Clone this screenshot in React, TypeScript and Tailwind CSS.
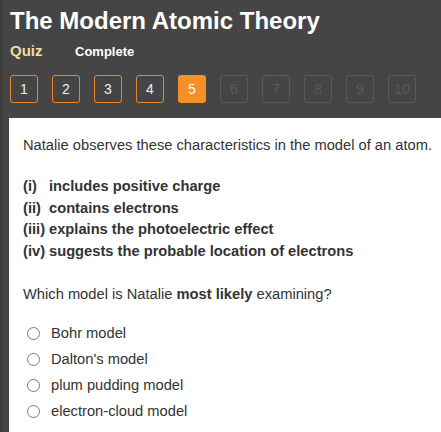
import { useState } from "react";

const options = ["Bohr model", "Dalton's model", "plum pudding model", "electron-cloud model"];

const traits = [
  ["(i)", "includes positive charge"],
  ["(ii)", "contains electrons"],
  ["(iii)", "explains the photoelectric effect"],
  ["(iv)", "suggests the probable location of electrons"],
];

export default function App() {
  const [picked, setPicked] = useState<number | null>(null);
  const current = 5;

  return (
    <div
      className="min-h-[432px] w-[441px] bg-[#454545] border-l-[3px] border-[#3b3b3b] flex flex-col"
      style={{ fontFamily: '"Liberation Sans", Arial, sans-serif' }}
    >
      {/* Header */}
      <div className="pl-[7px] pt-[7px]">
        <h1 className="text-[24px] leading-[28px] font-bold text-white">The Modern Atomic Theory</h1>
        <div className="flex items-baseline mt-[7px] h-[18px]">
          <span className="text-[15px] leading-[18px] font-bold text-[#f3dc9c] w-[65px]">Quiz</span>
          <span className="text-[13px] leading-[18px] font-bold text-white">Complete</span>
        </div>

        {/* Question nav */}
        <div className="flex gap-[14px] mt-[15px]">
          {Array.from({ length: 10 }, (_, i) => i + 1).map((n) => {
            const done = n < current;
            const active = n === current;
            return (
              <div
                key={n}
                className={
                  "w-[28px] h-[28px] rounded-[3px] flex items-center justify-center text-[14px] " +
                  (active
                    ? "bg-[#f58f26] text-white"
                    : done
                    ? "border border-[#e8872a] text-[#eeeeee]"
                    : "border border-[#5b5b5b] text-[#5b5b5b]")
                }
              >
                {n}
              </div>
            );
          })}
        </div>
      </div>

      {/* Question panel */}
      <div className="flex-1 bg-white mt-[15px] ml-[6px] pl-[14px] pt-[17px] pb-[14px] text-[#333333] text-[14.7px]">
        <p className="leading-[20px]">Natalie observes these characteristics in the model of an atom.</p>

        <div className="mt-[21px] font-bold leading-[21.5px]">
          {traits.map(([k, v]) => (
            <div key={k} className="flex">
              <span className="w-[26px]">{k}</span>
              <span>{v}</span>
            </div>
          ))}
        </div>

        <p className="mt-[22px] leading-[20px]">
          Which model is Natalie <b>most likely</b> examining?
        </p>

        <div className="mt-[16px] flex flex-col">
          {options.map((o, i) => (
            <label key={o} className="flex items-center h-[26px] cursor-pointer" onClick={() => setPicked(i)}>
              <span className="ml-[4px] w-[13px] h-[13px] rounded-full border border-[#7a7a7a] bg-white flex items-center justify-center">
                {picked === i && <span className="w-[7px] h-[7px] rounded-full bg-[#333]" />}
              </span>
              <span className="ml-[11px]">{o}</span>
            </label>
          ))}
        </div>
      </div>
    </div>
  );
}
